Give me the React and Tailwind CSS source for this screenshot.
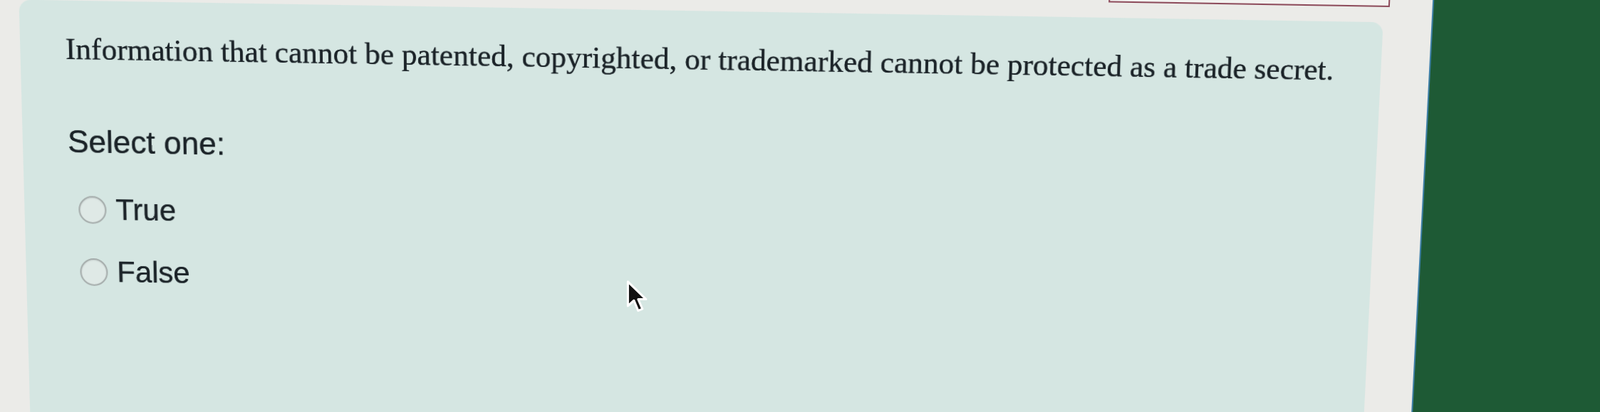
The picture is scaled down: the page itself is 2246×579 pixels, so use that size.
import React from "react";

function Radio({ label, className = "" }) {
  return (
    <label className={`flex items-center gap-[13px] ${className}`}>
      <span className="ml-[13px] block h-[39px] w-[39px] shrink-0 rounded-full border-[2.5px] border-[#a4abaa] bg-[#dfe9e6] shadow-[inset_0_1px_2px_rgba(0,0,0,0.12)]" />
      <span className="text-[42px] leading-none text-[#1b2328] [text-shadow:0_0_0.7px_#1b2328]">{label}</span>
    </label>
  );
}

function Cursor() {
  return (
    <svg
      className="absolute left-[878px] top-[392px] h-[52px] w-[34px]"
      viewBox="0 0 20 30"
      fill="none"
    >
      <path
        d="M2 2 L2 22 L7 17.5 L10.5 26 L14 24.5 L10.5 16.5 L17 16.5 Z"
        fill="#111"
        stroke="#fff"
        strokeWidth="1.8"
        strokeLinejoin="round"
      />
    </svg>
  );
}

export default function App() {
  return (
    <div className="relative h-[579px] w-full overflow-hidden bg-[#ebebe8] font-['Liberation_Sans',Arial,sans-serif]">
      {/* photographed screen, slightly tilted */}
      <div className="-ml-[40px] -mt-[40px] flex h-[680px] w-[2326px] [transform:perspective(2000px)_rotate(0.95deg)_rotateX(-4.6deg)]">
        <div className="flex w-[2035px] flex-col pl-[40px]">
          {/* box above, only its lower edge shows */}
          <div className="ml-[1546px] h-[39px] w-[390px] border-[2.5px] border-t-0 border-[#8d4b5b] bg-[#f3f2f0]" />

          {/* question card */}
          <div className="ml-[34px] mt-[21px] w-[1894px] flex-1 rounded-[16px] bg-[#d5e6e2] pl-[63px] pt-[45px]">
            <p className="font-['Liberation_Serif','Times_New_Roman',serif] text-[43px] leading-none text-[#1b2328] [text-shadow:0_0_0.7px_#1b2328]">
              Information that cannot be patented, copyrighted, or trademarked cannot be protected as a trade secret.
            </p>

            <p className="mt-[86px] text-[44px] leading-none text-[#1b2328] [text-shadow:0_0_0.7px_#1b2328]">Select one:</p>

            <div className="flex flex-col">
              <Radio label="True" className="mt-[52px]" />
              <Radio label="False" className="mt-[46px]" />
            </div>
          </div>
        </div>

        {/* dark green area on the right */}
        <div className="flex-1 border-l-2 border-[#3d7fa6] bg-[#1e5a35]" />
      </div>

      <Cursor />
    </div>
  );
}
